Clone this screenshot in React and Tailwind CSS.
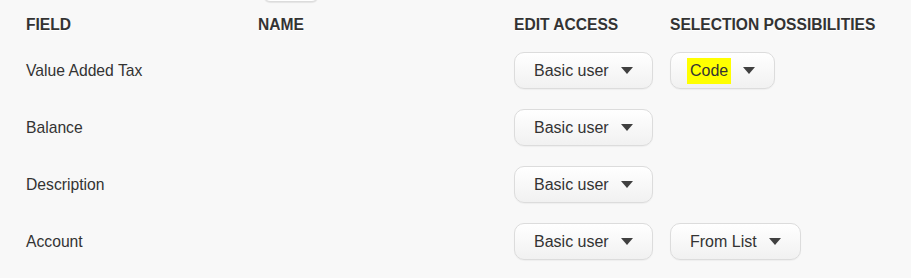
import React from "react";

const ROWS = [
  { field: "Value Added Tax", access: "Basic user", sel: "Code", hl: true },
  { field: "Balance", access: "Basic user" },
  { field: "Description", access: "Basic user" },
  { field: "Account", access: "Basic user", sel: "From List" },
];

function Caret() {
  return (
    <svg width="12" height="7" viewBox="0 0 12 7" className="shrink-0">
      <path d="M0 0 L12 0 L6 7 Z" fill="#404040" />
    </svg>
  );
}

function DropBtn({ label, hl }) {
  return (
    <button
      className={
        "flex h-[37px] items-center gap-[12px] rounded-[10px] border border-[#dcdcdc] bg-gradient-to-b from-white to-[#f1f1f1] pr-[19px] text-[16px] text-[#333] shadow-[0_1px_1px_rgba(0,0,0,0.04)] " +
        (hl ? "pl-[16px]" : "pl-[19px]")
      }
    >
      {hl ? (
        <span className="bg-[#ffff00] px-[3px] leading-[26px]">{label}</span>
      ) : (
        <span>{label}</span>
      )}
      <Caret />
    </button>
  );
}

export default function App() {
  return (
    <div className="min-h-screen bg-[#f8f8f8] font-['Liberation_Sans',Arial,sans-serif] text-[#333]">
      <div className="relative">
        <div className="absolute left-[264px] top-[-6px] h-[8px] w-[54px] rounded-b-[6px] border border-[#dcdcdc] bg-white shadow-[0_1px_1px_rgba(0,0,0,0.08)]" />
      </div>
      <div className="grid grid-cols-[232px_256px_156px_1fr] pl-[26px]">
        <div className="col-span-4 grid h-[42px] grid-cols-subgrid pt-[16px] text-[15.6px] font-bold uppercase leading-[18px] [text-shadow:0_1px_0_#fff]">
          <div>Field</div>
          <div>Name</div>
          <div>Edit access</div>
          <div>Selection possibilities</div>
        </div>
        {ROWS.map((r) => (
          <div key={r.field} className="col-span-4 grid h-[57px] grid-cols-subgrid items-center text-[15.7px]">
            <div>{r.field}</div>
            <div />
            <div><DropBtn label={r.access} /></div>
            <div>{r.sel && <DropBtn label={r.sel} hl={r.hl} />}</div>
          </div>
        ))}
      </div>
    </div>
  );
}
